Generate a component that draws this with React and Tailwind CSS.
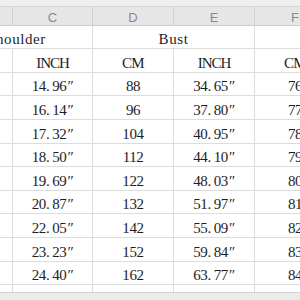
import React from "react";

const rows = [
  ["14.96″", "88", "34.65″", "76"],
  ["16.14″", "96", "37.80″", "77"],
  ["17.32″", "104", "40.95″", "78"],
  ["18.50″", "112", "44.10″", "79"],
  ["19.69″", "122", "48.03″", "80"],
  ["20.87″", "132", "51.97″", "81"],
  ["22.05″", "142", "55.09″", "82"],
  ["23.23″", "152", "59.84″", "83"],
  ["24.40″", "162", "63.77″", "84"],
];
const heights = [23, 24, 24, 23, 24, 23, 24, 24, 23];

const font = { fontFamily: '"Liberation Serif", serif' };

function Num({ v }) {
  const [a, b] = v.split(".");
  return (
    <span className="whitespace-nowrap">
      {a}
      <span className="mr-[3px]">.</span>
      {b.slice(0, -1)}
      <span className="ml-[1px]">{b.slice(-1)}</span>
    </span>
  );
}

function Cell({ w, children, last }) {
  return (
    <div
      className={`${w} h-full shrink-0 flex items-end justify-center pb-[1px] ${last ? "" : "border-r border-[#dcdcdc]"} whitespace-nowrap`}
    >
      {children}
    </div>
  );
}

export default function App() {
  return (
    <div
      className="w-[300px] h-[300px] overflow-hidden bg-white flex flex-col text-[15px] leading-none tracking-[-0.4px] text-[#1e1e1e]"
      style={font}
    >
      <div className="h-[6px] shrink-0 bg-[#efefef] border-b border-[#d6d6d6] box-content" />
      <div
        className="h-[19px] shrink-0 flex bg-[#e6e6e6] border-b border-[#cdcdcd] text-[13px] text-[#8a8a8a] tracking-normal"
        style={{ fontFamily: '"Liberation Sans", sans-serif' }}
      >
        <div className="w-[13px] shrink-0 border-r border-[#d2d2d2]" />
        <div className="w-[80px] shrink-0 border-r border-[#d2d2d2] flex items-center justify-center pt-[2px]">C</div>
        <div className="w-[81px] shrink-0 border-r border-[#d2d2d2] flex items-center justify-center pt-[2px]">D</div>
        <div className="w-[81px] shrink-0 border-r border-[#d2d2d2] flex items-center justify-center pt-[2px]">E</div>
        <div className="w-[80px] shrink-0 flex items-center justify-center pt-[2px]">F</div>
      </div>
      <div className="h-[23px] shrink-0 flex border-b border-[#dcdcdc]">
        <div className="w-[93px] shrink-0 h-full border-r border-[#dcdcdc] flex items-end pb-[1px] overflow-hidden">
          <span className="ml-[-13px] whitespace-nowrap tracking-[0.6px]">Shoulder</span>
        </div>
        <Cell w="w-[162px]"><span className="tracking-[0.6px]">Bust</span></Cell>
        <Cell w="w-[80px]" last></Cell>
      </div>
      <div className="h-[24px] shrink-0 flex border-b border-[#dcdcdc]">
        <Cell w="w-[13px]"></Cell>
        <Cell w="w-[80px]"><span className="tracking-[-1px]">INCH</span></Cell>
        <Cell w="w-[81px]"><span className="tracking-[-0.6px]">CM</span></Cell>
        <Cell w="w-[81px]"><span className="tracking-[-1px]">INCH</span></Cell>
        <Cell w="w-[80px]" last><span className="tracking-[-0.6px]">CM</span></Cell>
      </div>
      {rows.map((r, i) => (
        <div
          key={i}
          className="shrink-0 flex border-b border-[#dcdcdc]"
          style={{ height: heights[i] }}
        >
          <Cell w="w-[13px]"></Cell>
          <Cell w="w-[80px]"><Num v={r[0]} /></Cell>
          <Cell w="w-[81px]">{r[1]}</Cell>
          <Cell w="w-[81px]"><Num v={r[2]} /></Cell>
          <Cell w="w-[80px]" last>{r[3]}</Cell>
        </div>
      ))}
      <div className="h-[7px] shrink-0 flex">
        <Cell w="w-[13px]"></Cell>
        <Cell w="w-[80px]"></Cell>
        <Cell w="w-[81px]"></Cell>
        <Cell w="w-[81px]"></Cell>
      </div>
      <div className="flex-1 bg-[#ebebeb] border-t border-[#d0d0d0]" />
    </div>
  );
}
